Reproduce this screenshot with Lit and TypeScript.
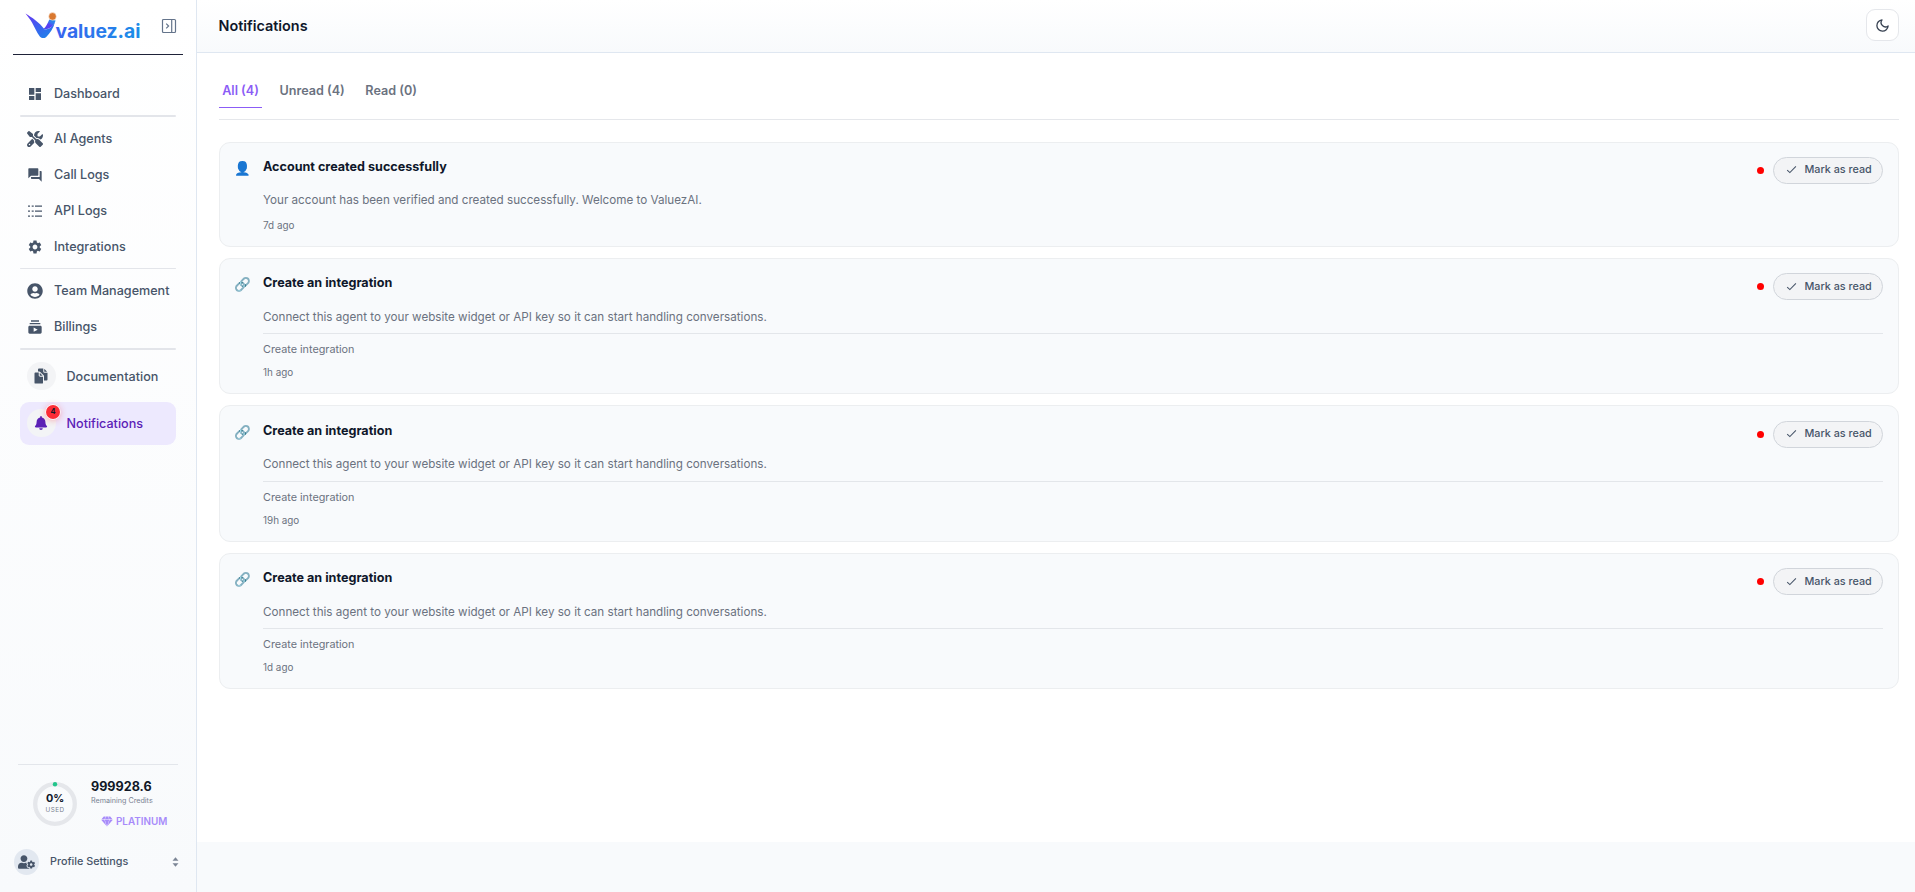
import { LitElement, html, svg, css } from "lit";
import { customElement, property } from "lit/decorators.js";

const icons: Record<string, { box: string; body: unknown }> = {
  dashboard: { box: "0 0 24 24", body: svg`<path d="M3 13h8V3H3v10zm0 8h8v-6H3v6zm10 0h8V11h-8v10zm0-18v6h8V3h-8z"/>` },
  tools: { box: "0 0 512 512", body: svg`<path d="M78.6 5C69.1-2.4 55.6-1.5 47 7L7 47c-8.5 8.5-9.4 22-2.1 31.6l80 104c4.5 5.9 11.6 9.4 19 9.4l54.1 0 109 109c-14.7 29-10 65.4 14.3 89.6l112 112c12.5 12.5 32.8 12.5 45.3 0l64-64c12.5-12.5 12.5-32.8 0-45.3l-112-112c-24.2-24.2-60.6-29-89.6-14.3l-109-109 0-54.1c0-7.5-3.5-14.5-9.4-19L78.6 5zM19.9 396.1C7.2 408.8 0 426.1 0 444.1C0 481.6 30.4 512 67.9 512c18 0 35.3-7.2 48-19.9L233.7 374.3c-7.8-20.9-9-43.6-3.6-65.1l-61.7-61.7L19.9 396.1zM512 144c0-10.5-1.1-20.7-3.2-30.5c-2.4-11.2-16.1-14.1-24.2-6l-63.9 63.9c-3 3-7.1 4.7-11.3 4.7L352 176c-8.8 0-16-7.2-16-16l0-57.4c0-4.2 1.7-8.3 4.7-11.3l63.9-63.9c8.1-8.1 5.2-21.8-6-24.2C388.7 1.1 378.5 0 368 0C288.5 0 224 64.5 224 144l0 .8 85.3 85.3c36-9.1 75.8 .5 104 28.7L429 274.5c49-23 83-72.8 83-130.5zM56 432a24 24 0 1 1 48 0 24 24 0 1 1 -48 0z"/>` },
  forum: { box: "0 0 24 24", body: svg`<path d="M21 6h-2v9H6v2c0 .55.45 1 1 1h11l4 4V7c0-.55-.45-1-1-1zm-4 6V3c0-.55-.45-1-1-1H3c-.55 0-1 .45-1 1v14l4-4h10c.55 0 1-.45 1-1z"/>` },
  list: { box: "0 0 16 16", body: svg`<path d="M1 2.4h2v1.3H1zM4.7 2.4h2v1.3h-2zM8 2.4h7v1.3H8zM1 7.4h2v1.3H1zM4.7 7.4h2v1.3h-2zM8 7.4h7v1.3H8zM1 12.4h2v1.3H1zM4.7 12.4h2v1.3h-2zM8 12.4h7v1.3H8z"/>` },
  gear: { box: "0 0 24 24", body: svg`<path d="M19.14 12.94c.04-.3.06-.61.06-.94 0-.32-.02-.64-.07-.94l2.03-1.58c.18-.14.23-.41.12-.61l-1.92-3.32c-.12-.22-.37-.29-.59-.22l-2.39.96c-.5-.38-1.03-.7-1.62-.94l-.36-2.54c-.04-.24-.24-.41-.48-.41h-3.84c-.24 0-.43.17-.47.41l-.36 2.54c-.59.24-1.13.57-1.62.94l-2.39-.96c-.22-.08-.47 0-.59.22L2.74 8.87c-.12.21-.08.47.12.61l2.03 1.58c-.05.3-.09.63-.09.94s.02.64.07.94l-2.03 1.58c-.18.14-.23.41-.12.61l1.92 3.32c.12.22.37.29.59.22l2.39-.96c.5.38 1.03.7 1.62.94l.36 2.54c.05.24.24.41.48.41h3.84c.24 0 .44-.17.47-.41l.36-2.54c.59-.24 1.13-.56 1.62-.94l2.39.96c.22.08.47 0 .59-.22l1.92-3.32c.12-.22.07-.47-.12-.61l-2.01-1.58zM12 15.6c-1.98 0-3.6-1.62-3.6-3.6s1.62-3.6 3.6-3.6 3.6 1.62 3.6 3.6-1.62 3.6-3.6 3.6z"/>` },
  user: { box: "0 0 496 512", body: svg`<path d="M248 8C111 8 0 119 0 256s111 248 248 248 248-111 248-248S385 8 248 8zm0 96c48.6 0 88 39.4 88 88s-39.4 88-88 88-88-39.4-88-88 39.4-88 88-88zm0 344c-58.7 0-111.3-26.6-146.5-68.2 18.8-35.4 55.6-59.8 98.5-59.8 2.4 0 4.8.4 7.1 1.1 13 4.2 26.6 6.9 40.9 6.9 14.3 0 28-2.7 40.9-6.9 2.3-.7 4.7-1.1 7.1-1.1 42.9 0 79.7 24.4 98.5 59.8C359.3 421.4 306.7 448 248 448z"/>` },
  billing: { box: "0 0 24 24", body: svg`<path d="M20 8H4V6h16v2zm-2-6H6v2h12V2zm4 10v8c0 1.1-.9 2-2 2H4c-1.1 0-2-.9-2-2v-8c0-1.1.9-2 2-2h16c1.1 0 2 .9 2 2zm-6 4l-6-3.27v6.53L16 16z"/>` },
  docs: { box: "0 0 512 512", body: svg`<path d="M298.39 248a4 4 0 002.86-6.8l-78.4-79.72a4 4 0 00-6.85 2.81V236a12 12 0 0012 12z"/><path d="M197 267a43.67 43.67 0 01-13-31v-92h-108a28 28 0 00-28 28v296a28 28 0 0028 28h216a28 28 0 0028-28V280h-92a43.61 43.61 0 01-31-13zM372 120h70.39a4 4 0 002.86-6.8l-78.4-79.72a4 4 0 00-6.85 2.81V108a12 12 0 0012 12z"/><path d="M372 152a44.34 44.34 0 01-44-44V16H190a30 30 0 00-30 30v66h42.12A40.81 40.81 0 01231 124.14l109.16 111a41.11 41.11 0 0111.83 29V400h82a30 30 0 0030-30V152z"/>` },
  bell: { box: "0 0 448 512", body: svg`<path d="M224 512c35.32 0 63.97-28.65 63.97-64H160.03c0 35.35 28.65 64 63.97 64zm215.39-149.71c-19.32-20.76-55.47-51.99-55.47-154.29 0-77.7-54.48-139.9-127.94-155.16V32c0-17.67-14.32-32-31.98-32s-31.98 14.33-31.98 32v20.84C118.56 68.1 64.08 130.3 64.08 208c0 102.3-36.15 133.53-55.47 154.29-6 6.45-8.66 14.16-8.61 21.71.11 16.4 12.98 32 32.1 32h383.8c19.12 0 32-15.6 32.1-32 .05-7.55-2.61-15.27-8.61-21.71z"/>` },
  userCog: { box: "0 0 640 512", body: svg`<path d="M610.5 373.3c2.6-14.1 2.6-28.5 0-42.6l25.8-14.9c3-1.7 4.3-5.2 3.3-8.5-6.7-21.6-18.2-41.2-33.2-57.4-2.3-2.5-6-3.1-9-1.4l-25.8 14.9c-10.9-9.3-23.4-16.5-36.9-21.3v-29.8c0-3.4-2.4-6.4-5.7-7.1-22.3-5-45-4.8-66.2 0-3.3.7-5.7 3.7-5.7 7.1v29.8c-13.5 4.8-26 12-36.9 21.3l-25.8-14.9c-2.9-1.7-6.7-1.1-9 1.4-15 16.2-26.5 35.8-33.2 57.4-1 3.3.4 6.8 3.3 8.5l25.8 14.9c-2.6 14.1-2.6 28.5 0 42.6l-25.8 14.9c-3 1.7-4.3 5.2-3.3 8.5 6.7 21.6 18.2 41.1 33.2 57.4 2.3 2.5 6 3.1 9 1.4l25.8-14.9c10.9 9.3 23.4 16.5 36.9 21.3v29.8c0 3.4 2.4 6.4 5.7 7.1 22.3 5 45 4.8 66.2 0 3.3-.7 5.7-3.7 5.7-7.1v-29.8c13.5-4.8 26-12 36.9-21.3l25.8 14.9c2.9 1.7 6.7 1.1 9-1.4 15-16.2 26.5-35.8 33.2-57.4 1-3.3-.4-6.8-3.3-8.5l-25.8-14.9zM496 400.5c-26.8 0-48.5-21.8-48.5-48.5s21.8-48.5 48.5-48.5 48.5 21.8 48.5 48.5-21.7 48.5-48.5 48.5zM224 256c70.7 0 128-57.3 128-128S294.7 0 224 0 96 57.3 96 128s57.3 128 128 128zm201.2 226.5c-2.3-1.2-4.6-2.6-6.8-3.9l-7.9 4.6c-6 3.4-12.8 5.3-19.6 5.3-10.9 0-21.4-4.6-28.9-12.6-18.3-19.8-32.3-43.9-40.2-69.6-5.5-17.7 1.9-36.4 17.9-45.7l7.9-4.6c-.1-2.6-.1-5.2 0-7.8l-7.9-4.6c-16-9.2-23.4-28-17.9-45.7.9-2.9 2.2-5.8 3.2-8.7-3.8-.3-7.5-1.2-11.4-1.2h-16.7c-22.2 10.2-46.9 16-72.9 16s-50.6-5.8-72.9-16h-16.7C60.2 288 0 348.2 0 422.4V464c0 26.5 21.5 48 48 48h352c10.1 0 19.5-3.2 27.2-8.5-1.2-3.8-2-7.7-2-11.8v-9.2z"/>` },
  gem: { box: "0 0 24 22", body: svg`<path d="M5.500 1h3.800L6.800 7.200H.6zM10.100 1h3.800l2.500 6.200H7.600zM14.700 1h3.800l4.900 6.200h-6.200zM.7 8h6.200l3.800 11.500zM7.700 8h8.600l-4.300 13.500zM17.100 8h6.200l-10 11.500z"/>` },
  sort: { box: "0 0 8 11", body: svg`<path d="M4 0l3.400 4H.6zM4 11L.6 7h6.800z"/>` },
  panel: { box: "0 0 16 16", body: svg`<g fill="none" stroke="currentColor" stroke-width="1.200"><rect x="1.500" y="1.500" width="13" height="13" rx="1"/><path d="M10.700 1.500v13M5.200 5.600L7.600 8l-2.400 2.400"/></g>` },
  moon: { box: "0 0 24 24", body: svg`<path fill="none" stroke="currentColor" stroke-width="2.100" stroke-linecap="round" stroke-linejoin="round" d="M21 12.790A9 9 0 1 1 11.210 3 7 7 0 0 0 21 12.790z"/>` },
  check: { box: "0 0 12 12", body: svg`<path fill="none" stroke="currentColor" stroke-width="1.150" d="M1.300 6.600l2.900 2.800L10.800 2.500"/>` },
};

const icon = (name: string, cls = "ic") =>
  html`<svg class=${cls} viewBox=${icons[name].box} fill="currentColor">${icons[name].body}</svg>`;

@customElement("side-bar")
class SideBar extends LitElement {
  static styles = css`
    :host { display: flex; flex-direction: column; box-sizing: border-box; width: 197px; height: 892px; border-right: 1px solid #dfe7f1; background: linear-gradient(180deg, #fff, #f8fafc); color: #475569; flex: none; }
    .brand { display: flex; align-items: flex-start; justify-content: space-between; height: 54px; margin: 0 13px; padding: 0 6px 0 12px; box-sizing: border-box; flex: none; }
    .logo { width: 118px; height: 44px; display: block; }
    .toggle { width: 16px; height: 16px; margin-top: 18px; color: #64748b; }
    .rule { height: 1px; margin: 0 13px; background: #1e2238; flex: none; }
    nav { padding: 21px 20px 0; flex: 1; }
    .item { display: flex; align-items: center; box-sizing: border-box; height: 36px; padding: 0 0 1px 7px; font-size: 12.6px; font-weight: 500; white-space: nowrap; }
    .slot { width: 16px; height: 16px; display: flex; align-items: center; justify-content: center; margin-right: 11px; }
    .ic { width: 16px; height: 16px; display: block; }
    .sep { background: #e3e5ea; height: 2px; margin: 3px 0 4px; border-radius: 1px; }
    .sep.thin { height: 1px; }
    .sep.last { margin-bottom: 5px; }
    .big { height: 43px; border-radius: 9px; margin-bottom: 4px; }
    .big.active { background: #ede9fe; color: #5b21b6; }
    .disc { position: relative; width: 28.5px; height: 28.5px; border-radius: 50%; background: #f3f4f6; display: flex; align-items: center; justify-content: center; margin-right: 11px; }
    .bell { width: 14px; height: 14px; }
    .badge { position: absolute; left: 19px; top: -4px; width: 14px; height: 14px; border-radius: 50%; background: #fb2c36; color: #111827; font-size: 7.5px; font-weight: 700; line-height: 14px; text-align: center; box-shadow: 0 0 0 0.7px #fff, 0 1px 7px rgba(251, 44, 54, 0.45); }
    .usage { display: flex; margin: 0 18px; padding: 15px 0 0 15px; border-top: 1px solid #e3e6eb; height: 84px; box-sizing: border-box; }
    .ring { display: grid; width: 44px; height: 44px; margin-top: 2px; margin-right: 14px; }
    .ring > * { grid-area: 1 / 1; }
    .pct { display: flex; flex-direction: column; align-items: center; padding-top: 10px; }
    .pct b { font-size: 10.8px; line-height: 14px; color: #0f172a; }
    .pct span { font-size: 6.3px; line-height: 8px; color: #7a8392; letter-spacing: 0.45px; }
    .credits { font-size: 12.6px; font-weight: 700; line-height: 16px; color: #111827; margin-top: -1px; }
    .remain { font-size: 7.2px; line-height: 10px; color: #7a8392; margin-top: 1px; white-space: nowrap; }
    .plan { display: flex; align-items: center; gap: 3px; margin: 9px 0 0 10px; font-size: 9.9px; font-weight: 600; line-height: 13px; color: #a78bfa; }
    .gem { width: 12px; height: 11px; }
    .profile { display: flex; align-items: center; height: 25px; margin: 1px 17px 18px 14px; font-size: 10.8px; font-weight: 500; }
    .avatar { width: 25px; height: 26px; border-radius: 50%; background: #e2e8f0; display: flex; align-items: center; justify-content: center; margin-right: 11px; }
    .cog { width: 17px; height: 14px; }
    .sort { width: 7px; height: 10px; margin-left: auto; color: #7b8595; }
  `;
  item(name: string, label: string) {
    return html`<div class="item"><span class="slot">${icon(name)}</span>${label}</div>`;
  }
  render() {
    return html`
      <div class="brand">
        <svg class="logo" viewBox="0 0 118 44">
          <defs>
            <linearGradient id="wing" x1="0" y1="0" x2="0.7" y2="1"><stop offset="0" stop-color="#6a35f2"/><stop offset="0.5" stop-color="#3f5cf0"/><stop offset="1" stop-color="#2080ea"/></linearGradient>
            <linearGradient id="arm" x1="0.9" y1="0" x2="0.2" y2="1"><stop offset="0" stop-color="#2196e8"/><stop offset="0.35" stop-color="#3577ee"/><stop offset="0.6" stop-color="#5b3df5"/><stop offset="1" stop-color="#4f46ef"/></linearGradient>
            <linearGradient id="word" x1="0" y1="0" x2="1" y2="0.2"><stop offset="0" stop-color="#3c5cf0"/><stop offset="1" stop-color="#1d8ce8"/></linearGradient>
          </defs>
          <path fill="url(#wing)" d="M.5 13.500C7 17.500 14 22 19.500 29.300C24 29.500 26.500 27.500 30 22C28.500 28 25 33.500 21 37.200C19 38.500 16.500 38.300 15 36.800C11.500 32 9.500 27 7 22.500C5 19 2.500 16 .5 13.500z"/>
          <path fill="url(#arm)" d="M24.300 19.500L30.600 20.500C29 25.500 25 29.800 18.500 29C21 27 22.500 23.500 24.300 19.500z"/>
          <circle cx="27.500" cy="16.400" r="3.800" fill="#d9782f" stroke="#fff" stroke-width="0.500"/>
          <text x="30.500" y="37.700" textLength="85" lengthAdjust="spacingAndGlyphs" font-family="Inter" font-size="18.800" font-weight="700" fill="url(#word)">valuez.ai</text>
        </svg>
        ${icon("panel", "toggle")}
      </div>
      <div class="rule"></div>
      <nav>
        ${this.item("dashboard", "Dashboard")}
        <div class="sep"></div>
        ${this.item("tools", "AI Agents")} ${this.item("forum", "Call Logs")}
        ${this.item("list", "API Logs")} ${this.item("gear", "Integrations")}
        <div class="sep thin"></div>
        ${this.item("user", "Team Management")} ${this.item("billing", "Billings")}
        <div class="sep last"></div>
        <div class="item big"><span class="disc">${icon("docs")}</span>Documentation</div>
        <div class="item big active"><span class="disc">${icon("bell", "bell")}<span class="badge">4</span></span>Notifications</div>
      </nav>
      <div class="usage">
        <div class="ring">
          <svg viewBox="0 0 44 44"><circle cx="22" cy="22" r="19.800" fill="none" stroke="#e5e7eb" stroke-width="4.300"/><circle cx="22" cy="2.300" r="2.200" fill="#22c58b"/></svg>
          <div class="pct"><b>0%</b><span>USED</span></div>
        </div>
        <div>
          <div class="credits">999928.6</div>
          <div class="remain">Remaining Credits</div>
          <div class="plan">${icon("gem", "gem")}PLATINUM</div>
        </div>
      </div>
      <div class="profile"><span class="avatar">${icon("userCog", "cog")}</span>Profile Settings${icon("sort", "sort")}</div>
    `;
  }
}

@customElement("notification-card")
class NotificationCard extends LitElement {
  @property() emoji = "";
  @property() heading = "";
  @property() text = "";
  @property() action = "";
  @property() time = "";
  static styles = css`
    :host { display: flex; box-sizing: border-box; border: 1px solid #eceef0; border-radius: 11px; background: #f8fafc; padding: 14.3px 15px 12px; }
    .emoji { width: 29.3px; margin-left: -1.3px; padding-top: 2px; font-size: 13.5px; line-height: 18px; }
    .body { flex: 1; }
    .top { display: flex; align-items: flex-start; height: 33px; }
    .heading { flex: 1; font-size: 12.6px; font-weight: 700; line-height: 20px; color: #0f172a; }
    .dot { width: 7px; height: 7px; border-radius: 50%; background: #f00; margin: 10px 9px 0 0; }
    .mark { display: flex; align-items: center; box-sizing: border-box; width: 110px; height: 27px; padding: 0 0 1px 11.5px; border: 1px solid #d1d5db; border-radius: 14px; background: #f3f4f6; color: #475569; font-size: 10.8px; font-weight: 500; white-space: nowrap; }
    .check { width: 11px; height: 11px; margin-right: 8px; }
    .text { margin-top: 0.6px; font-size: 11.67px; line-height: 20.4px; color: #6b7280; }
    .action { margin-top: 6px; padding-top: 7px; border-top: 1px solid #e3e6ea; font-size: 10.8px; line-height: 17px; color: #6b7280; }
    .time { margin-top: 7px; font-size: 9.9px; line-height: 15px; color: #6b7280; }
  `;
  render() {
    return html`
      <div class="emoji">${this.emoji}</div>
      <div class="body">
        <div class="top">
          <div class="heading">${this.heading}</div>
          <span class="dot"></span>
          <div class="mark">${icon("check", "check")}Mark as read</div>
        </div>
        <div class="text">${this.text}</div>
        ${this.action ? html`<div class="action">${this.action}</div>` : ""}
        <div class="time">${this.time}</div>
      </div>
    `;
  }
}

@customElement("app-root")
class AppRoot extends LitElement {
  static styles = css`
    :host { display: flex; width: 100%; height: 892px; overflow: hidden; background: #f8fafc; font-family: Inter, "Liberation Sans", sans-serif; }
    main { flex: 1; height: 842px; background: #fff; }
    header { display: flex; align-items: center; justify-content: space-between; box-sizing: border-box; height: 53px; padding: 0 16px 2px 21.5px; border-bottom: 1px solid #dfe7f1; background: linear-gradient(180deg, #fff, #f8fafc); }
    h1 { margin: 0; font-size: 14.4px; font-weight: 600; color: #0f172a; }
    .theme { display: flex; align-items: center; justify-content: center; box-sizing: border-box; width: 33px; height: 32px; border: 1px solid #e5e7eb; border-radius: 9px; background: #fff; color: #374151; }
    .moon { width: 15px; height: 15px; }
    .tabs { display: flex; gap: 14.2px; margin: 20px 16px 21.5px 22px; height: 47px; box-sizing: border-box; border-bottom: 1px solid #e5e7eb; font-size: 12.6px; font-weight: 600; color: #6b7280; }
    .tab { box-sizing: border-box; height: 35px; padding: 8px 3.2px 0; line-height: 20px; border-bottom: 1px solid transparent; }
    .tab.on { color: #8b5cf6; border-color: #8b5cf6; }
    .list { display: flex; flex-direction: column; gap: 11px; margin: 0 16px 0 22px; }
    .short { height: 105.3px; }
    .tall { height: 136.5px; }
  `;
  render() {
    const text = "Connect this agent to your website widget or API key so it can start handling conversations.";
    return html`
      <side-bar></side-bar>
      <main>
        <header><h1>Notifications</h1><div class="theme">${icon("moon", "moon")}</div></header>
        <div class="tabs"><div class="tab on">All (4)</div><div class="tab">Unread (4)</div><div class="tab">Read (0)</div></div>
        <div class="list">
          <notification-card class="short" emoji="👤" heading="Account created successfully" text="Your account has been verified and created successfully. Welcome to ValuezAI." time="7d ago"></notification-card>
          ${["1h ago", "19h ago", "1d ago"].map(
            (t) => html`<notification-card class="tall" emoji="🔗" heading="Create an integration" .text=${text} action="Create integration" .time=${t}></notification-card>`
          )}
        </div>
      </main>
    `;
  }
}
